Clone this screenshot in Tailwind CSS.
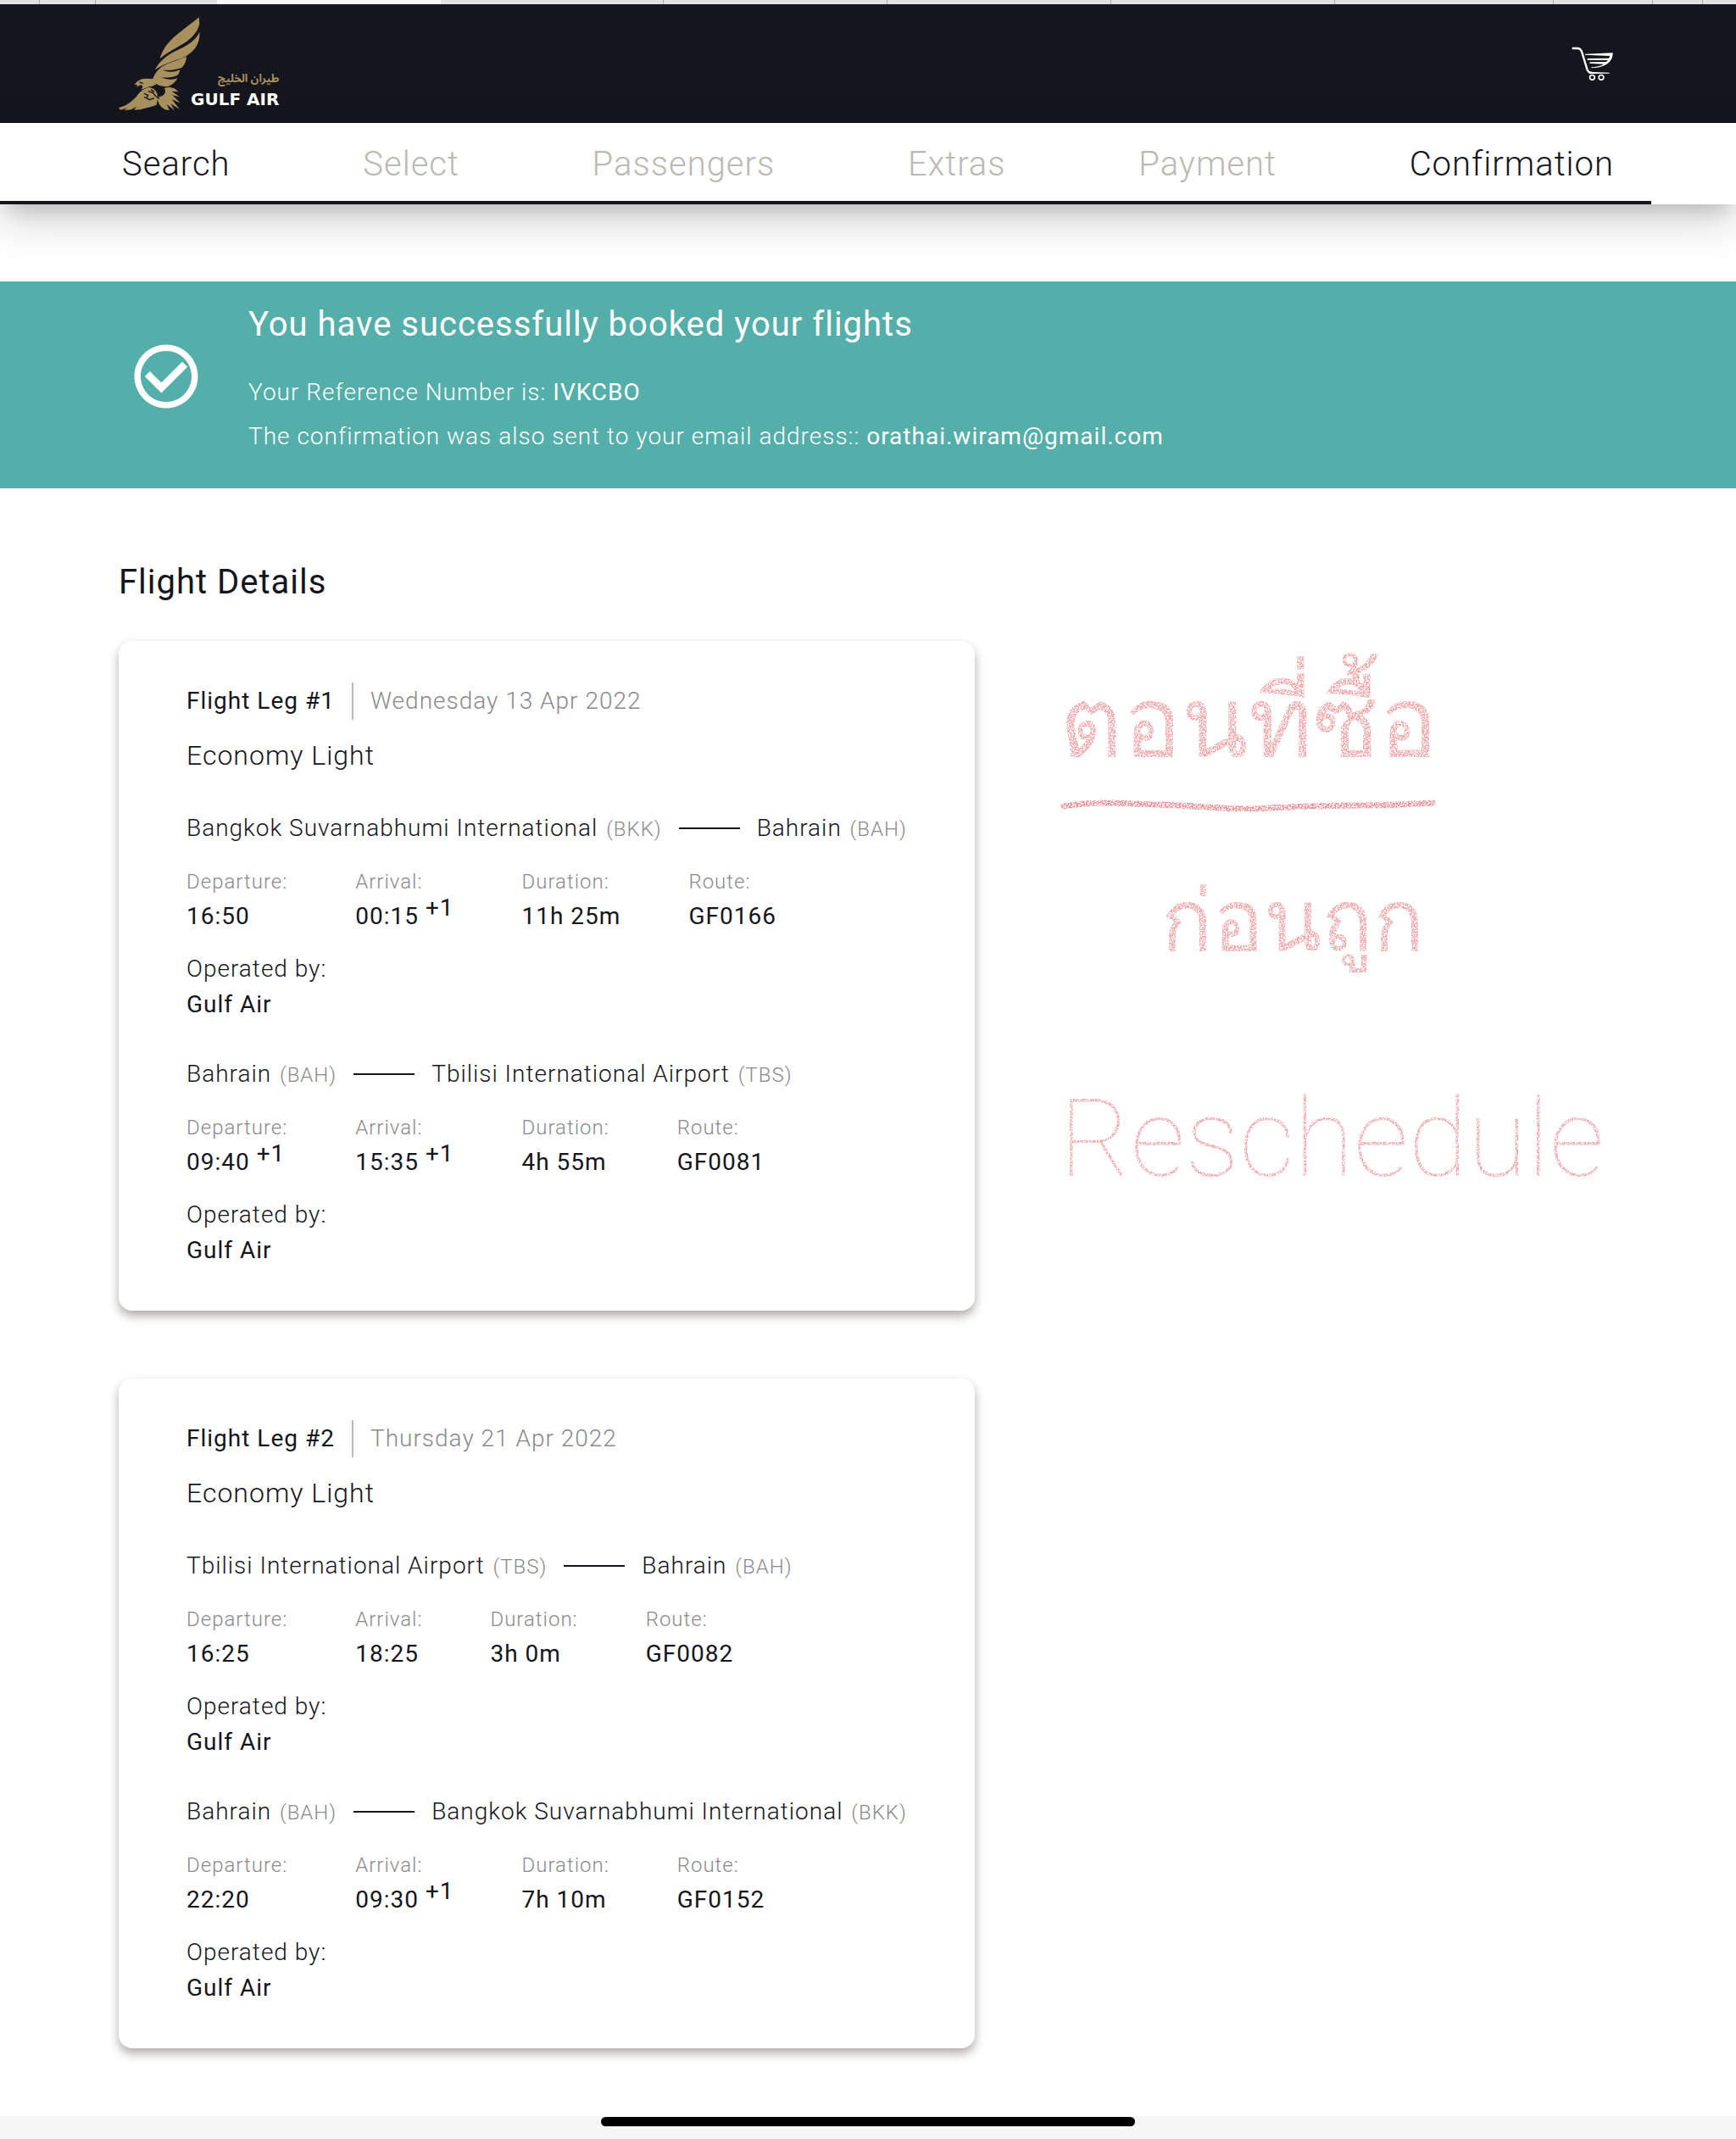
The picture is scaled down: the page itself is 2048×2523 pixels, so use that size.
<!DOCTYPE html>
<html lang="en">
<head>
    <meta charset="UTF-8">
    <meta name="viewport" content="width=device-width, initial-scale=1.0">
    <title>Gulf Air - Booking Confirmation</title>
    <script src="https://cdn.jsdelivr.net/npm/@tailwindcss/browser@4"></script>
</head>
<body class="min-h-screen flex flex-col bg-white text-[#15151e] font-['Roboto',sans-serif] font-light tracking-[1px]">
    <!-- tab strip -->
    <div class="grid grid-cols-[47fr_66fr_143fr_264fr_263fr_264fr_264fr_264fr_258fr_117fr_59fr_39fr] h-[5px] bg-[#e2e2e3]">
        <span class="border-r border-[#a9a9ab]"></span>
        <span class="border-r border-[#a9a9ab]"></span>
        <span></span>
        <span class="bg-[#f7f7f9]"></span>
        <span class="border-r border-[#a9a9ab]"></span>
        <span class="border-r border-[#a9a9ab]"></span>
        <span class="border-r border-[#a9a9ab]"></span>
        <span class="border-r border-[#a9a9ab]"></span>
        <span class="border-r border-[#a9a9ab]"></span>
        <span class="border-r border-[#a9a9ab]"></span>
        <span class="border-r border-[#a9a9ab]"></span>
        <span></span>
    </div>

    <header class="flex items-center justify-between h-[140px] pl-[140px] pr-36 bg-[#15151e]">
        <a href="#" class="flex items-end tracking-normal" aria-label="Gulf Air home">
            <svg class="w-[100px] h-[112px]" viewBox="60 56 300 336" fill="#a8905f">
                <path d="M344 60C322 80 272 114 246 140C224 162 212 185 206 206C230 186 262 170 290 153C320 134 342 108 346 82Z"/>
                <path d="M346 112C334 140 304 160 270 175C234 191 204 215 188 246C215 228 250 216 280 206C316 192 350 162 346 112Z"/>
                <path d="M300 198C280 210 240 219 215 234C195 248 184 266 179 284C190 298 212 307 236 305C254 297 264 286 268 276C254 282 228 282 211 272C232 276 260 272 271 262C275 255 276 250 277 245C258 256 232 256 214 246C236 250 262 246 284 238C294 228 300 214 300 198Z"/>
                <!-- head -->
                <path d="M186 278C168 279 150 275 137 281C126 286 119 292 116 300L124 298L128 307C133 299 139 298 143 302C146 307 144 312 138 317C152 313 164 304 178 304L192 298Z"/>
                <!-- lower wing -->
                <path d="M168 308C148 312 134 324 122 342C106 358 86 376 60 380L66 388L92 381L78 390L104 387L124 376L114 388L136 387C154 380 176 378 194 370L198 346C200 326 186 310 168 308Z"/>
                <!-- tail -->
                <path d="M222 310C240 305 262 310 270 324L248 322L276 342L250 336L279 364L248 350L276 386L244 366L258 390L230 368L240 389C222 388 210 380 202 364L194 344L208 340C224 336 228 324 222 310Z"/>
                <path d="M134 290L146 294M150 330L164 336L160 344M150 342L170 352L186 346M164 322L180 326L190 338L204 348M174 316L186 324" fill="none" stroke="#15151e" stroke-width="4"/>
            </svg>
            <span class="flex flex-col items-end -ml-[15px] pb-[2px] leading-6">
                <span lang="ar" dir="rtl" class="font-['Noto_Sans_Arabic','DejaVu_Sans_Condensed','DejaVu_Sans',sans-serif] font-bold text-[13px] text-[#a8905f]">طيران الخليج</span>
                <span class="font-['DejaVu_Sans',sans-serif] font-bold text-[20px] text-white">GULF AIR</span>
            </span>
        </a>
        <button type="button" aria-label="Cart">
            <svg class="w-[50px] h-[43px]" viewBox="160 160 150 129" fill="none" stroke="#fff">
                <path d="M162 169H181C190 169 193 173 196 181L215 243C218 253 222 256 232 256" stroke-width="7"/>
                <path d="M222 252L294 255V258L222 259Z" fill="#fff" stroke="none"/>
                <path fill="#fff" stroke="none" d="M208 189L306 185C307 212 286 238 230 239V236C252 234 266 230 274 225L224 222V218L282 217L288 211L216 210V205L292 204L296 196L208 192Z"/>
                <circle cx="233" cy="272" r="8.500" stroke-width="5"/>
                <circle cx="265" cy="272" r="8.500" stroke-width="5"/>
            </svg>
        </button>
    </header>

    <nav class="relative bg-white shadow-[0_16px_20px_-10px_rgba(0,0,0,0.14),0_20px_50px_rgba(0,0,0,0.18)]">
        <ol class="flex items-center justify-between h-24 px-36 pt-[2px] text-[40px] text-[#bbb9b3]">
            <li><a href="#" class="text-[#15151e]">Search</a></li>
            <li><a href="#">Select</a></li>
            <li><a href="#">Passengers</a></li>
            <li><a href="#">Extras</a></li>
            <li><a href="#">Payment</a></li>
            <li><a href="#" class="text-[#15151e]" aria-current="step">Confirmation</a></li>
        </ol>
        <div class="absolute bottom-0 left-0 right-[100px] h-1 bg-[#15151e]"></div>
    </nav>

    <section class="flex items-start mt-[91px] px-[140px] pt-[25px] pb-[35px] bg-[#54aeaa] text-white">
        <svg class="w-[90px] h-[90px] mt-[42px] ml-[11px] mr-[52px] shrink-0" viewBox="0 0 24 24" fill="#fff">
            <path d="M16.590 7.580L10 14.170l-3.590-3.580L5 12l5 5 8-8z" transform="translate(0.500 0)" stroke="#fff" stroke-width="0.300"/>
            <path d="M12 2C6.480 2 2 6.480 2 12s4.480 10 10 10 10-4.480 10-10S17.520 2 12 2zm0 18c-4.420 0-8-3.580-8-8s3.580-8 8-8 8 3.580 8 8-3.580 8-8 8z"/>
        </svg>
        <div class="text-[28px] leading-[52px]">
            <h1 class="mb-7 text-[40px] font-normal">You have successfully booked your flights</h1>
            <p>Your Reference Number is: <span class="font-normal">IVKCBO</span></p>
            <p>The confirmation was also sent to your email address:: <span class="font-normal">orathai.wiram@gmail.com</span></p>
        </div>
    </section>

    <main class="grow grid grid-cols-[1010fr_658fr] gap-[100px] px-[140px] pt-[85px] pb-20">
        <section>
            <h2 class="mb-[43px] text-[40px] leading-[52px] font-normal">Flight Details</h2>
            <div id="legs" class="flex flex-col gap-20"></div>
        </section>

        <!-- crayon note -->
        <aside class="pt-28 font-thin tracking-normal text-[#f2a5aa]" style="filter: url(#crayon)">
            <p lang="th" class="text-[115px] leading-[160px]">ตอนที่ซื้อ</p>
            <svg class="w-[446px] h-4 mt-2" viewBox="0 0 446 16" fill="none" stroke="#ec8f96" stroke-width="7" stroke-linecap="round">
                <path d="M5 10C40 4 70 6 110 8C150 8 190 14 230 13C280 10 320 9 360 9C400 9 420 7 440 6"/>
            </svg>
            <p lang="th" class="mt-[30px] pl-[120px] text-[100px] leading-[200px]">ก่อนถูก</p>
            <p class="mt-14 text-[128px] leading-[200px]">Reschedule</p>
        </aside>
    </main>

    <footer class="flex justify-center h-[27px] pt-px bg-[#f7f7f7]">
        <div class="w-[630px] h-[11px] rounded-full bg-black"></div>
    </footer>

    <svg class="absolute w-0 h-0">
        <filter id="crayon">
            <feTurbulence type="fractalNoise" baseFrequency="0.6" numOctaves="2" result="noise"/>
            <feColorMatrix in="noise" type="matrix" values="0 0 0 0 0  0 0 0 0 0  0 0 0 0 0  0 0 0 5 -1.900" result="grain"/>
            <feComposite in="SourceGraphic" in2="grain" operator="in"/>
        </filter>
    </svg>

    <script>
        const BKK = ["Bangkok Suvarnabhumi International", "BKK"];
        const BAH = ["Bahrain", "BAH"];
        const TBS = ["Tbilisi International Airport", "TBS"];

        const legs = [
            {
                date: "Wednesday 13 Apr 2022",
                segments: [
                    { from: BKK, to: BAH, departure: ["16:50"], arrival: ["00:15", "+1"], duration: "11h 25m", route: "GF0166" },
                    { from: BAH, to: TBS, departure: ["09:40", "+1"], arrival: ["15:35", "+1"], duration: "4h 55m", route: "GF0081" }
                ]
            },
            {
                date: "Thursday 21 Apr 2022",
                segments: [
                    { from: TBS, to: BAH, departure: ["16:25"], arrival: ["18:25"], duration: "3h 0m", route: "GF0082" },
                    { from: BAH, to: BKK, departure: ["22:20"], arrival: ["09:30", "+1"], duration: "7h 10m", route: "GF0152" }
                ]
            }
        ];

        function place([name, code]) {
            return `<span>${name} <span class="ml-0.5 text-2xl text-[#8a8a8e]">(${code})</span></span>`;
        }

        function field(label, value, days) {
            return `
                <div>
                    <dt class="text-2xl leading-8 text-[#8a8a8e]">${label}:</dt>
                    <dd class="leading-[50px] font-normal">${value}${days ? ` <sup class="-top-2.5 text-[28px]">${days}</sup>` : ""}</dd>
                </div>
            `;
        }

        function segment(s) {
            return `
                <div>
                    <h4 class="flex items-center gap-5 leading-10 whitespace-nowrap">
                        ${place(s.from)}
                        <span class="w-[72px] h-[2px] bg-[#15151e]"></span>
                        ${place(s.to)}
                    </h4>
                    <dl class="flex gap-20 mt-[27px]">
                        ${field("Departure", ...s.departure)}
                        ${field("Arrival", ...s.arrival)}
                        ${field("Duration", s.duration)}
                        ${field("Route", s.route)}
                    </dl>
                    <p class="mt-4 leading-[42px]">Operated by:<br><span class="font-normal">Gulf Air</span></p>
                </div>
            `;
        }

        document.getElementById("legs").innerHTML = legs.map((leg, i) => `
            <article class="px-20 pt-[49px] pb-[50px] rounded-2xl bg-white text-[28px] shadow-[0_6px_12px_rgba(24,16,8,0.35)]">
                <header class="flex items-center h-11">
                    <h3 class="font-normal">Flight Leg #${i + 1}</h3>
                    <span class="w-[2px] h-11 mx-5 bg-[#bbb9b9]"></span>
                    <time class="text-[#8a8a8e]">${leg.date}</time>
                </header>
                <p class="mt-[22px] mb-[46px] text-[32px] leading-10">Economy Light</p>
                <div class="flex flex-col gap-[41px]">${leg.segments.map(segment).join("")}</div>
            </article>
        `).join("");
    </script>
</body>
</html>
